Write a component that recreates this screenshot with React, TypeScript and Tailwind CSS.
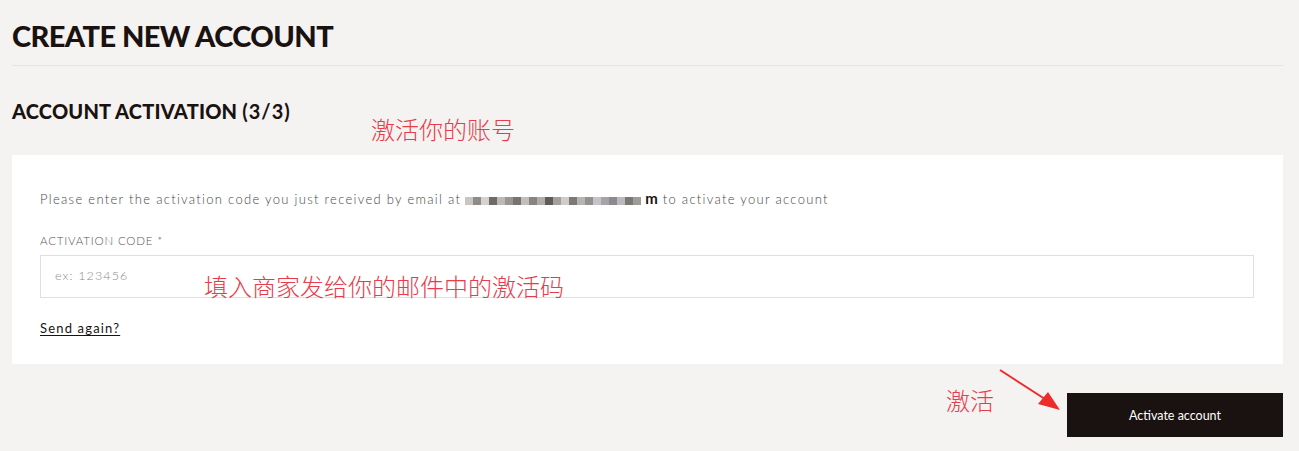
import React from 'react'

const blur = [
  '#c9c5c2', '#8f8b88', '#d6d2cf', '#6f6b68', '#bdb9b6', '#9a9693', '#777370', '#c2bebb',
  '#888481', '#b0aca9', '#5f5b58', '#a3a09d', '#d0ccc9', '#7d7976', '#b8b4b1', '#939190',
  '#c5c3c8', '#a6a4a9', '#8c8a8f', '#bbb9be', '#7a7875', '#9f9b98',
]

function BlurredEmail() {
  return (
    <span className="inline-flex items-center align-middle h-[10px] mx-[4px]">
      {blur.map((c, i) => (
        <span key={i} className="inline-block h-[8px] w-[8px]" style={{ background: c }} />
      ))}
    </span>
  )
}

export default function App() {
  return (
    <div className="min-h-screen bg-[#f5f3f1] px-[12px] pt-[18px] font-['Lato',sans-serif] text-[#1a1210]">
      <h1 className="text-[29px] font-black tracking-[-0.02em] leading-[36px] font-['Lato',sans-serif]">
        CREATE NEW ACCOUNT
      </h1>
      <div className="mt-[11px] h-px w-[1271px] bg-[#e6e3e0]" />

      {/* step header + note */}
      <div className="relative mt-[32px] h-[57px]">
        <h2 className="text-[20px] font-black tracking-[0.01em] leading-[26px]">
          ACCOUNT ACTIVATION <span className="font-bold tracking-[0.05em]">(3/3)</span>
        </h2>
        <span className="absolute left-[359px] top-[15px] text-[24px] font-light text-[#e63c4c] font-['Noto_Sans_CJK_SC',serif] leading-[32px]">
          激活你的账号
        </span>
      </div>

      {/* card */}
      <div className="w-[1271px] h-[209px] bg-white px-[28px] pt-[34px]">
        <p className="text-[13px] font-light tracking-[0.1em] text-[#4a4644] leading-[18px]">
          Please enter the activation code you just received by email at
          <BlurredEmail />
          <span className="font-bold text-[#1a1210] text-[15px] tracking-normal">m</span> to activate your account
        </p>

        <div className="mt-[26px] text-[11.5px] font-light tracking-[0.07em] text-[#5a5654] leading-[14px]">
          ACTIVATION CODE *
        </div>

        <div className="relative mt-[7px] w-[1214px] h-[43px] border border-[#e2e0de] flex items-center px-[14px]">
          <span className="text-[12.5px] font-light tracking-[0.09em] text-[#8e8a88]">ex: 123456</span>
          <span className="absolute left-[163px] top-[14px] text-[24px] font-light text-[#e63c4c] font-['Noto_Sans_CJK_SC',serif] leading-[32px]">
            填入商家发给你的邮件中的激活码
          </span>
        </div>

        <div className="mt-[17px]">
          <span className="text-[13px] tracking-[0.09em] underline underline-offset-2 text-[#1a1210]">
            Send again?
          </span>
        </div>
      </div>

      {/* action row */}
      <div className="relative w-[1271px] flex justify-end mt-[29px]">
        <span className="absolute left-[934px] top-[-9px] text-[24px] font-light text-[#e63c4c] font-['Noto_Sans_CJK_SC',serif] leading-[32px]">
          激活
        </span>
        <svg className="absolute left-[986px] top-[-25px]" width="64" height="44" viewBox="0 0 64 44">
          <line x1="2" y1="2" x2="50" y2="33" stroke="#ee2a2a" strokeWidth="2" />
          <polygon points="62,42 40,36 50,24" fill="#ee2a2a" />
        </svg>
        <button className="w-[216px] h-[44px] bg-[#1a1210] text-white text-[12.5px] font-['Lato',sans-serif] pt-[3px]">
          Activate account
        </button>
      </div>
    </div>
  )
}
